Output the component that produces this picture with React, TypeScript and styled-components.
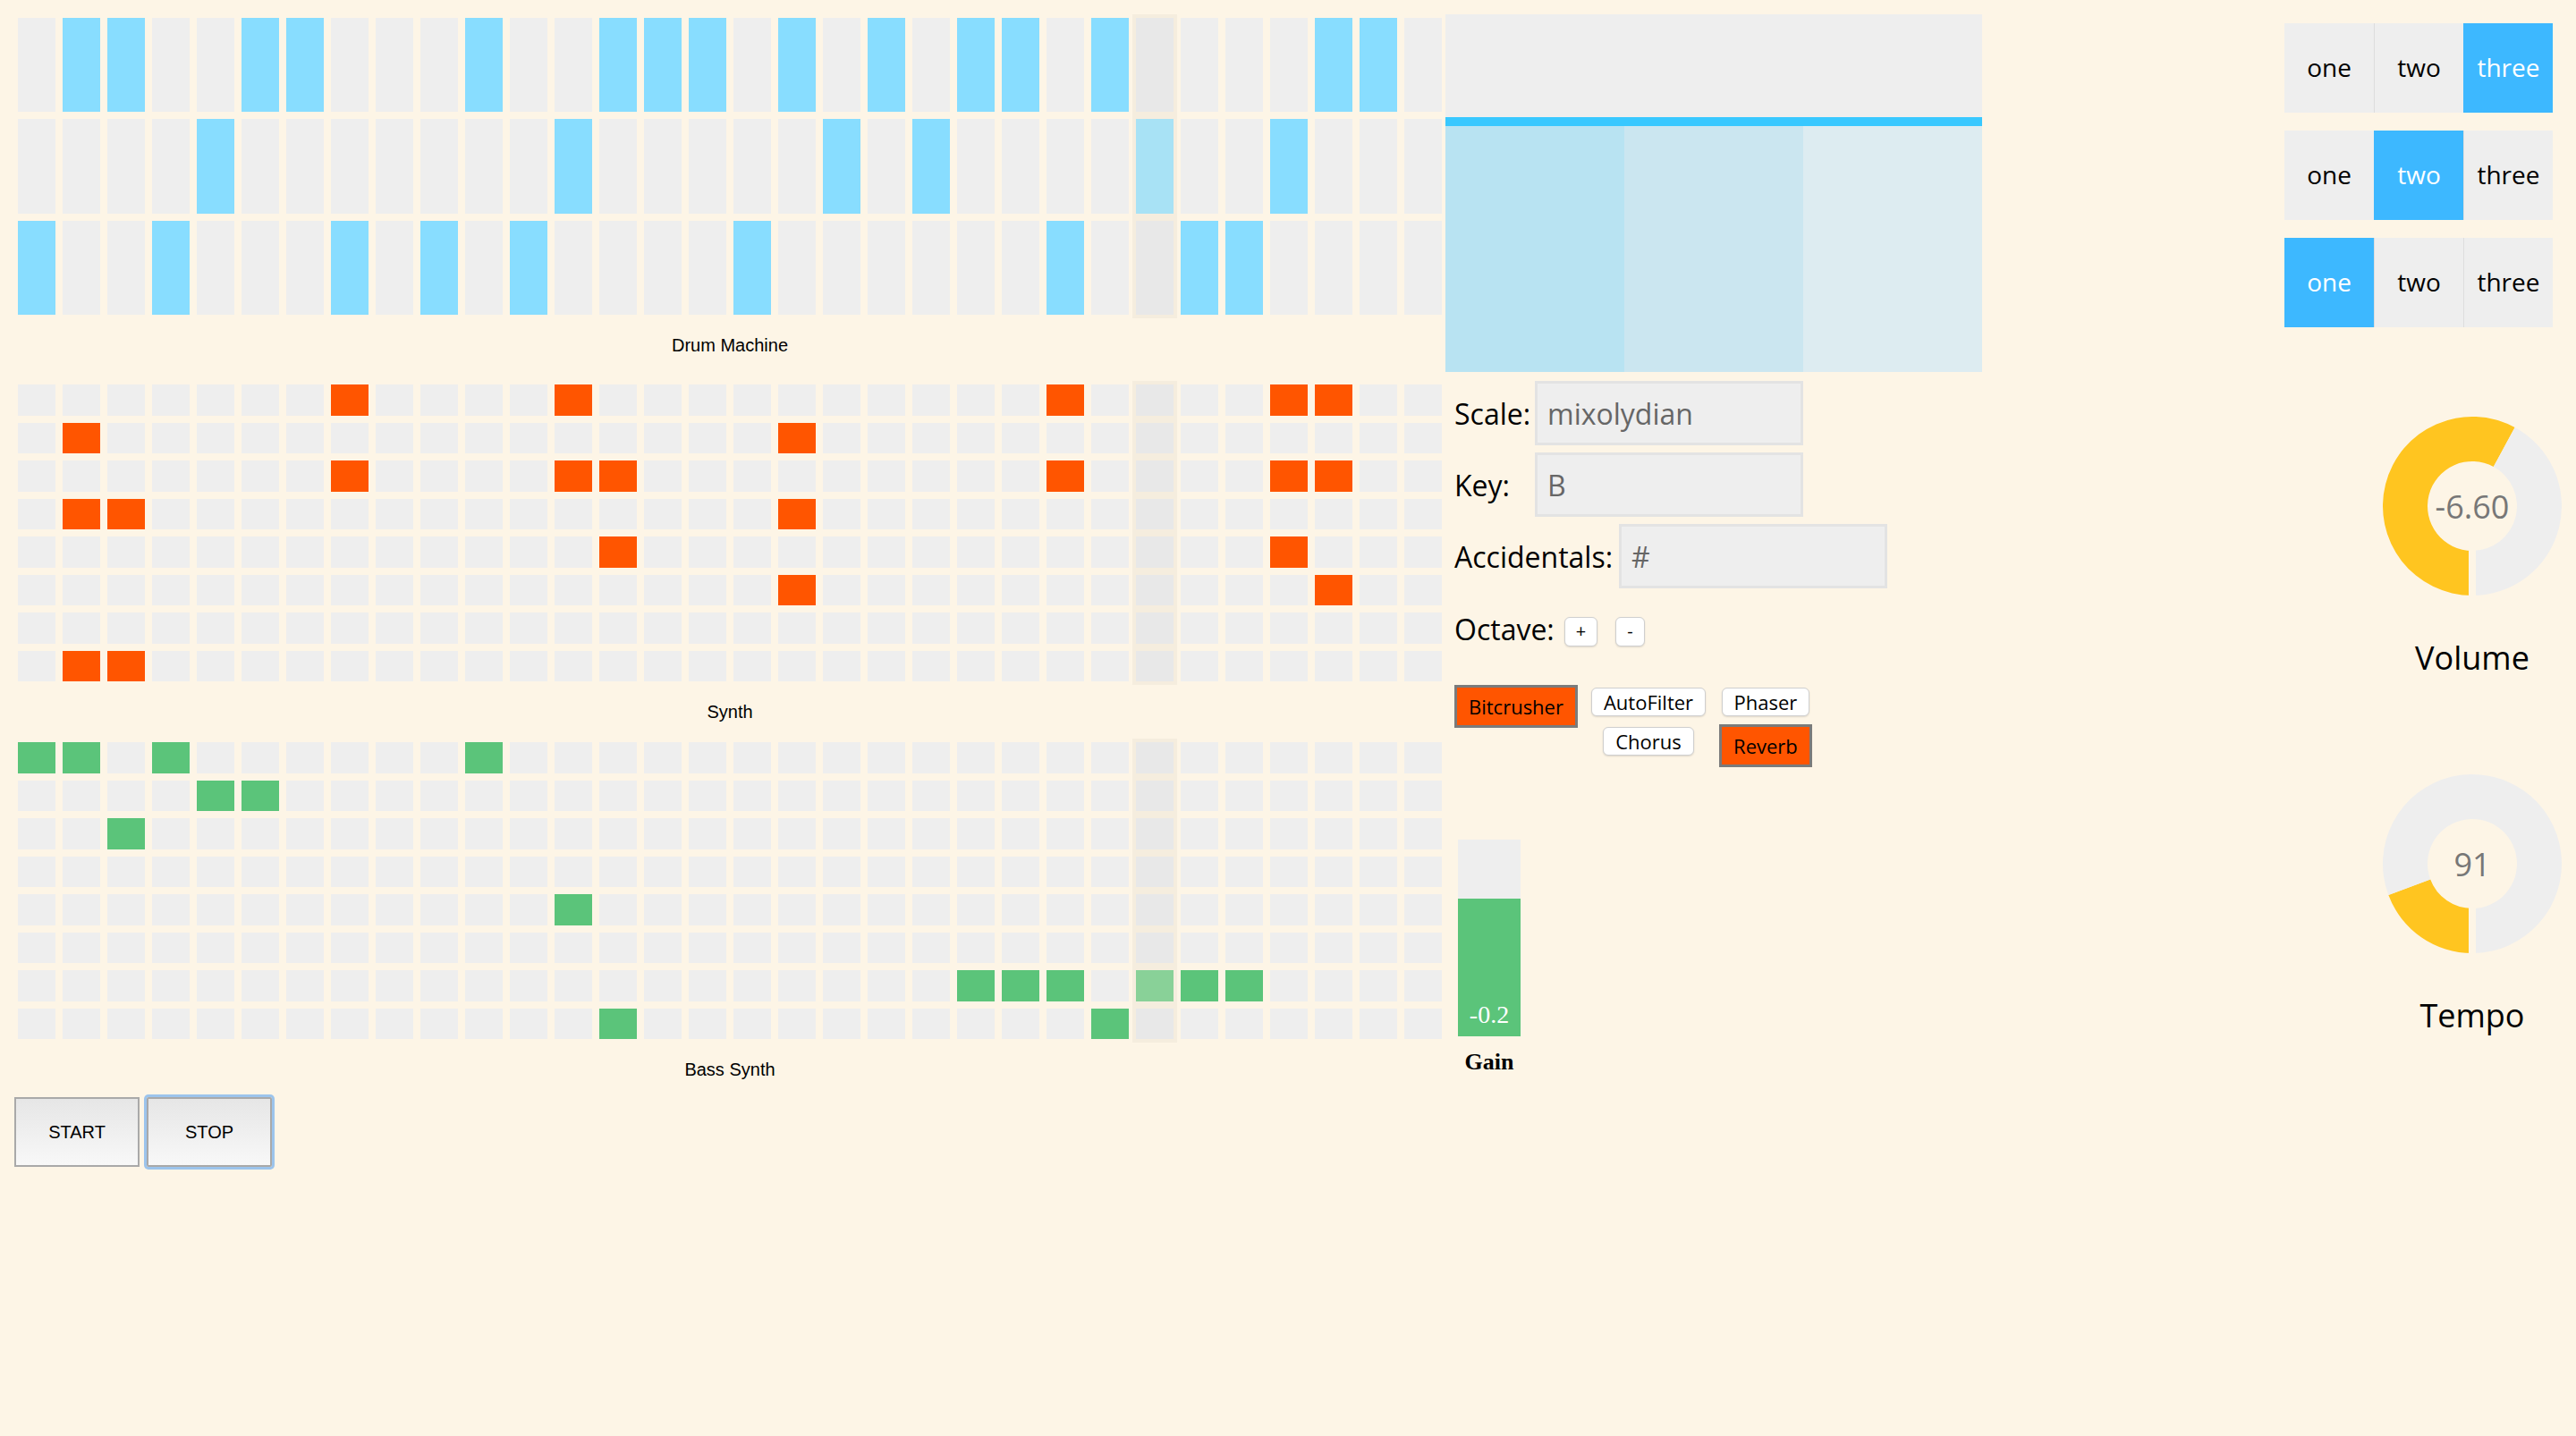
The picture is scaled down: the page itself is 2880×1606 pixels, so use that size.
import React from 'react'
import styled, { createGlobalStyle } from 'styled-components'

const GlobalStyle = createGlobalStyle`
    body {
        margin: 8px;
        background: oldlace;
        font-family: "Liberation Sans", Arial, sans-serif;
    }
    * { box-sizing: border-box; }
`

const COLS = 32
const PLAYHEAD = 25

const drumNotes = [
    [1, 2, 5, 6, 10, 13, 14, 15, 17, 19, 21, 22, 24, 29, 30],
    [4, 12, 18, 20, 25, 28],
    [0, 3, 7, 9, 11, 16, 23, 26, 27],
]

const synthNotes = [
    [7, 12, 23, 28, 29],
    [1, 17],
    [7, 12, 13, 23, 28, 29],
    [1, 2, 17],
    [13, 28],
    [17, 29],
    [],
    [1, 2],
]

const bassNotes = [
    [0, 1, 3, 10],
    [4, 5],
    [2],
    [],
    [12],
    [],
    [21, 22, 23, 25, 26, 27],
    [13, 24],
]

const Page = styled.div`
    display: flex;
    align-items: flex-start;
    padding: 8px;
`

const Sequencer = styled.div`
    width: 1600px;
    display: flex;
    flex-direction: column;
`

const Grid = styled.div`
    display: flex;
    height: 340px;
`

const Column = styled.div<{ playing: boolean }>`
    display: flex;
    flex-direction: column;
    width: 50px;
    background: ${({ playing }) => (playing ? 'rgba(0, 0, 0, 0.03)' : 'transparent')};
`

const Cell = styled.div<{ active: boolean; playing: boolean; color: string; h: number }>`
    width: 42px;
    height: ${({ h }) => h}px;
    margin: 4px;
    background: ${({ active, playing, color }) => (active ? color : playing ? '#e8e8e8' : '#eeeeee')};
    opacity: ${({ active, playing }) => (active && playing ? 0.7 : 1)};
`

const TrackLabel = styled.div<{ extra?: number }>`
    height: 60px;
    line-height: 60px;
    margin-bottom: ${({ extra }) => extra || 0}px;
    text-align: center;
    font-size: 20px;
    color: #000;
`

const Transport = styled.div`
    display: flex;
    gap: 8px;
    margin-top: 1px;
`

const TransportButton = styled.button<{ focused?: boolean }>`
    width: 140px;
    height: 78px;
    border: 2px solid #a9a9a9;
    background: linear-gradient(#e6e6e6, #f8f8f8);
    font-family: "Liberation Sans", Arial, sans-serif;
    font-size: 20px;
    color: #000;
    box-shadow: ${({ focused }) => (focused ? '0 0 0 3px #9cc4ec' : 'none')};
    border-radius: ${({ focused }) => (focused ? '2px' : '0')};
`

const Middle = styled.div`
    width: 600px;
    display: flex;
    flex-direction: column;
    font-family: "Open Sans", sans-serif;
`

const RangeBox = styled.div`
    width: 600px;
    height: 400px;
    display: flex;
    flex-direction: column;
`

const RangeTop = styled.div`
    height: 115px;
    background: #eeeeee;
`

const RangeBar = styled.div`
    height: 10px;
    background: #38c8ff;
`

const RangeColumns = styled.div`
    flex: 1;
    display: flex;
`

const RangeColumn = styled.div<{ shade: string }>`
    flex: 1;
    background: ${({ shade }) => shade};
`

const Form = styled.div`
    padding-left: 10px;
    margin-top: 10px;
    display: flex;
    flex-direction: column;
`

const FieldRow = styled.div`
    display: flex;
    align-items: center;
    height: 72px;
    margin-bottom: 8px;
`

const FieldLabel = styled.span<{ w?: number }>`
    font-size: 32px;
    color: #000;
    min-width: ${({ w }) => (w ? `${w}px` : 'auto')};
    margin-right: ${({ w }) => (w ? '0' : '7px')};
`

const FieldInput = styled.input`
    width: 300px;
    height: 72px;
    border: 3px solid #e3e3e3;
    background: #eeeeee;
    font-family: "Open Sans", sans-serif;
    font-size: 32px;
    color: #666;
    padding: 0 11px;
    outline: none;
`

const OctaveRow = styled.div`
    display: flex;
    align-items: center;
    height: 44px;
    margin-top: 15px;
`

const SmallButton = styled.button<{ first?: boolean }>`
    height: 33px;
    padding: 0 12px;
    margin-top: 6px;
    margin-left: ${({ first }) => (first ? '11px' : '20px')};
    background: #fff;
    border: 1px solid #cfcfcf;
    border-radius: 6px;
    box-shadow: 0 1px 2px rgba(0, 0, 0, 0.12);
    font-family: "Open Sans", sans-serif;
    font-size: 20px;
    line-height: 1;
    color: #000;
`

const Effects = styled.div`
    display: flex;
    align-items: flex-start;
    gap: 15px;
    margin-top: 41px;
`

const EffectColumn = styled.div`
    display: flex;
    flex-direction: column;
    align-items: center;
    gap: 9px;
`

const EffectButton = styled.button<{ on?: boolean }>`
    height: ${({ on }) => (on ? '48px' : '32px')};
    margin-top: ${({ on }) => (on ? '0' : '3px')};
    padding: 0 13px;
    background: ${({ on }) => (on ? '#ff5500' : '#fff')};
    border: ${({ on }) => (on ? '3px solid #7b7b7b' : '1px solid #cfcfcf')};
    border-radius: ${({ on }) => (on ? '0' : '6px')};
    box-shadow: ${({ on }) => (on ? 'none' : '0 1px 2px rgba(0, 0, 0, 0.12)')};
    font-family: "Open Sans", sans-serif;
    font-size: 22px;
    color: #000;
    white-space: nowrap;
`

const GainBlock = styled.div`
    width: 70px;
    margin: 81px 0 0 4px;
    display: flex;
    flex-direction: column;
    align-items: center;
`

const GainTrack = styled.div`
    width: 70px;
    height: 220px;
    background: #eeeeee;
    display: flex;
    flex-direction: column;
    justify-content: flex-end;
`

const GainFill = styled.div`
    background: #5bc47a;
    display: flex;
    align-items: flex-end;
    justify-content: center;
    padding-bottom: 8px;
    font-family: "Liberation Serif", "Times New Roman", serif;
    font-size: 28px;
    color: #fff;
`

const GainLabel = styled.div`
    margin-top: 14px;
    font-family: "Liberation Serif", "Times New Roman", serif;
    font-weight: bold;
    font-size: 26px;
    color: #000;
`

const Controls = styled.div`
    width: 310px;
    margin-left: auto;
    display: flex;
    flex-direction: column;
    font-family: "Open Sans", sans-serif;
`

const Segmented = styled.div`
    display: flex;
    width: 300px;
    margin-top: 10px;
    & + & {
        margin-top: 20px;
    }
`

const Segment = styled.div<{ active: boolean; first: boolean }>`
    width: 100px;
    height: 100px;
    line-height: 98px;
    text-align: center;
    font-size: 28px;
    background: ${({ active }) => (active ? '#3db8ff' : '#eeeeee')};
    color: ${({ active }) => (active ? '#fff' : '#000')};
    border-left: ${({ first, active }) => (first ? 'none' : `1px solid ${active ? '#3db8ff' : '#dddddd'}`)};
`

const KnobBlock = styled.div`
    align-self: flex-end;
    width: 200px;
    height: 400px;
    padding-top: 100px;
    display: flex;
    flex-direction: column;
    align-items: center;
`

const KnobLabel = styled.div`
    margin-top: 45px;
    font-size: 36px;
    color: #000;
`

function Track({ notes, color, label, extra }: { notes: number[][]; color: string; label: string; extra?: number }) {
    const h = 340 / notes.length - 8
    return (
        <>
            <Grid>
                {Array.from({ length: COLS }).map((_, c) => (
                    <Column key={c} playing={c === PLAYHEAD}>
                        {notes.map((row, r) => (
                            <Cell key={r} h={h} color={color} active={row.includes(c)} playing={c === PLAYHEAD} />
                        ))}
                    </Column>
                ))}
            </Grid>
            <TrackLabel extra={extra}>{label}</TrackLabel>
        </>
    )
}

function arcPath(R: number, r: number, a0: number, a1: number) {
    const p = (rad: number, a: number) => {
        const t = (a * Math.PI) / 180
        return `${100 + rad * Math.sin(t)} ${100 - rad * Math.cos(t)}`
    }
    const large = a1 - a0 > 180 ? 1 : 0
    return `M${p(R, a0)} A${R} ${R} 0 ${large} 1 ${p(R, a1)} L${p(r, a1)} A${r} ${r} 0 ${large} 0 ${p(r, a0)} Z`
}

function Knob({ fraction, value, label }: { fraction: number; value: string; label: string }) {
    const end = 180 + fraction * 360
    return (
        <KnobBlock>
            <svg width="200" height="200" viewBox="0 0 200 200">
                <path d={arcPath(100, 50, 180, end)} fill="#ffc520" />
                <path d={arcPath(100, 50, end, 540)} fill="#eeeeee" />
                <rect x="96" y="148" width="8" height="54" fill="oldlace" />
                <text x="100" y="100" textAnchor="middle" dominantBaseline="central" fontFamily="Open Sans" fontSize="36" fill="#777">
                    {value}
                </text>
            </svg>
            <KnobLabel>{label}</KnobLabel>
        </KnobBlock>
    )
}

const segmentNames = ['one', 'two', 'three']

export default function App() {
    const gain = 0.7
    return (
        <>
            <GlobalStyle />
            <Page>
                <Sequencer>
                    <Track notes={drumNotes} color="#88ddff" label="Drum Machine" extra={10} />
                    <Track notes={synthNotes} color="#ff5500" label="Synth" />
                    <Track notes={bassNotes} color="#5bc47a" label="Bass Synth" />
                    <Transport>
                        <TransportButton>START</TransportButton>
                        <TransportButton focused>STOP</TransportButton>
                    </Transport>
                </Sequencer>
                <Middle>
                    <RangeBox>
                        <RangeTop />
                        <RangeBar />
                        <RangeColumns>
                            <RangeColumn shade="#b8e3f2" />
                            <RangeColumn shade="#cbe6f0" />
                            <RangeColumn shade="#ddecf1" />
                        </RangeColumns>
                    </RangeBox>
                    <Form>
                        <FieldRow>
                            <FieldLabel w={90}>Scale:</FieldLabel>
                            <FieldInput defaultValue="mixolydian" />
                        </FieldRow>
                        <FieldRow>
                            <FieldLabel w={90}>Key:</FieldLabel>
                            <FieldInput defaultValue="B" />
                        </FieldRow>
                        <FieldRow>
                            <FieldLabel>Accidentals:</FieldLabel>
                            <FieldInput defaultValue="#" />
                        </FieldRow>
                        <OctaveRow>
                            <FieldLabel w={1}>Octave:</FieldLabel>
                            <SmallButton first>+</SmallButton>
                            <SmallButton>-</SmallButton>
                        </OctaveRow>
                        <Effects>
                            <EffectColumn>
                                <EffectButton on>Bitcrusher</EffectButton>
                            </EffectColumn>
                            <EffectColumn>
                                <EffectButton>AutoFilter</EffectButton>
                                <EffectButton>Chorus</EffectButton>
                            </EffectColumn>
                            <EffectColumn>
                                <EffectButton>Phaser</EffectButton>
                                <EffectButton on>Reverb</EffectButton>
                            </EffectColumn>
                        </Effects>
                        <GainBlock>
                            <GainTrack>
                                <GainFill style={{ height: `${gain * 100}%` }}>-0.2</GainFill>
                            </GainTrack>
                            <GainLabel>Gain</GainLabel>
                        </GainBlock>
                    </Form>
                </Middle>
                <Controls>
                    {[2, 1, 0].map((sel, i) => (
                        <Segmented key={i}>
                            {segmentNames.map((name, j) => (
                                <Segment key={name} first={j === 0} active={j === sel}>
                                    {name}
                                </Segment>
                            ))}
                        </Segmented>
                    ))}
                    <Knob fraction={0.579} value="-6.60" label="Volume" />
                    <Knob fraction={0.193} value="91" label="Tempo" />
                </Controls>
            </Page>
        </>
    )
}
